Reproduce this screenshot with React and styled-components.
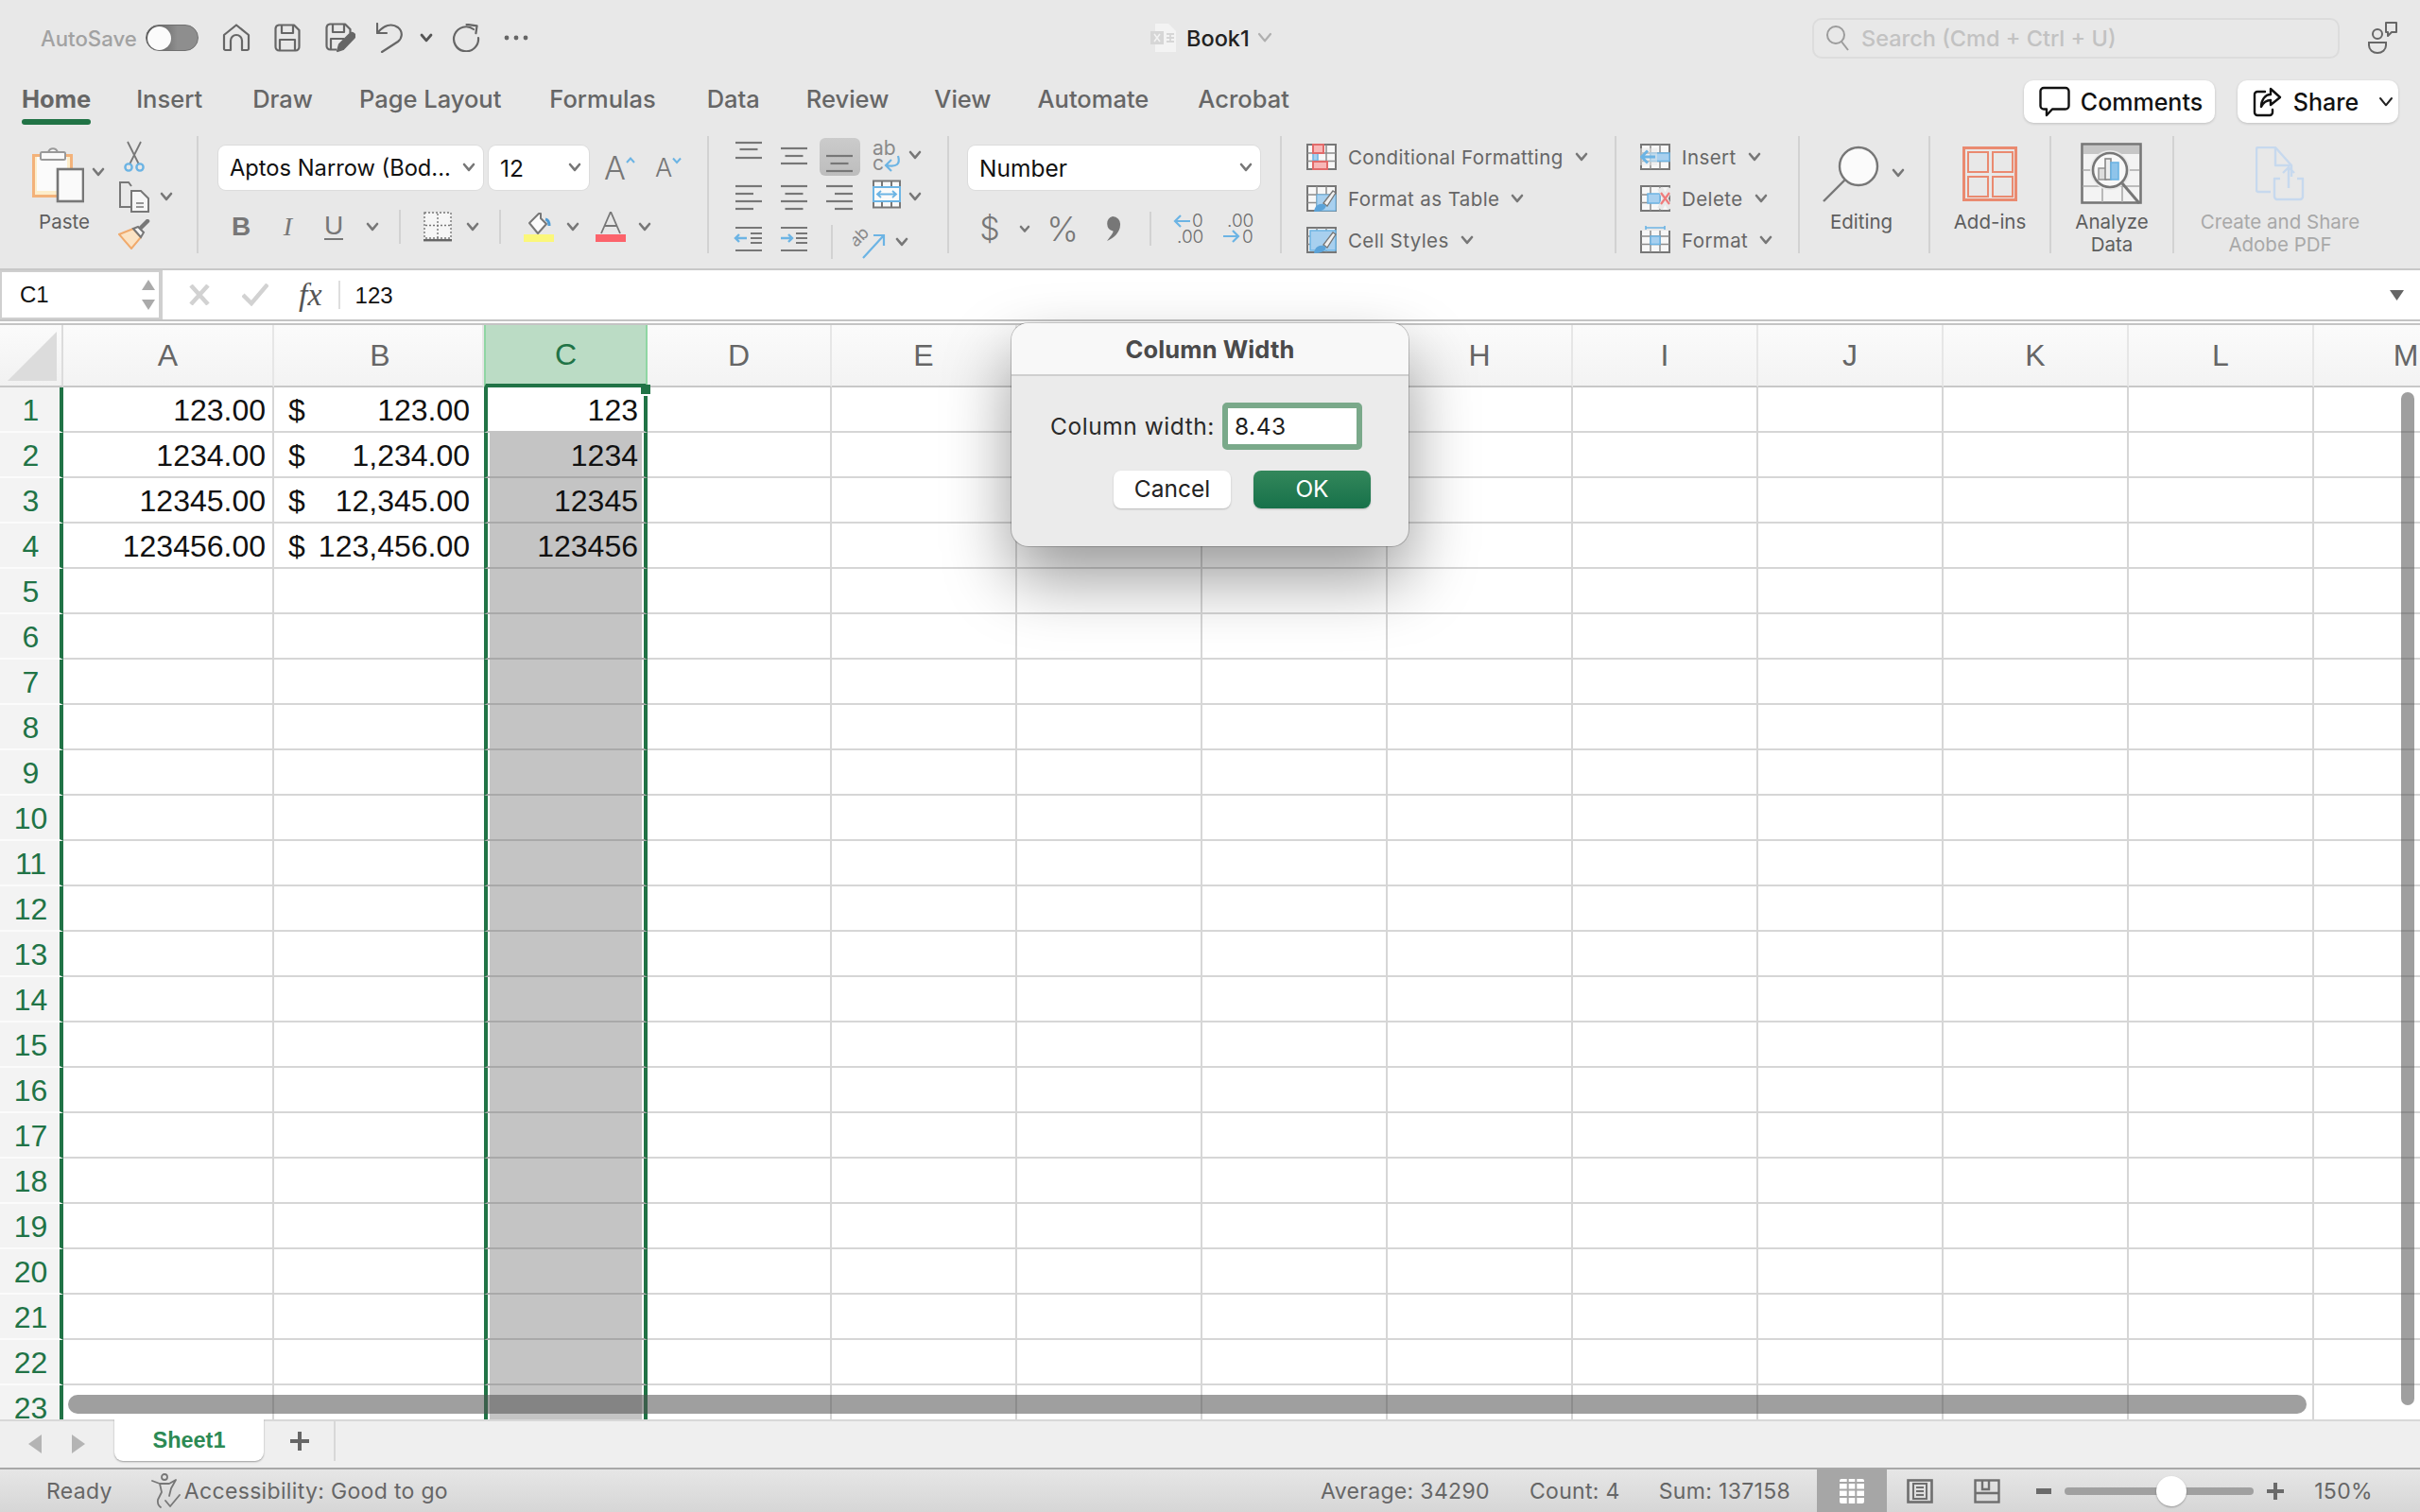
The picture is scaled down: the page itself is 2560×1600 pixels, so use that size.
import React from 'react'
import styled, { createGlobalStyle } from 'styled-components'

const UI = `Inter, "Liberation Sans", sans-serif`
const CELL = `"Liberation Sans", Arial, sans-serif`
const GREEN = '#217346'
const GRAY = '#777777'
const BLUE = '#6cb4e4'

const GlobalStyle = createGlobalStyle`
  html, body { margin: 0; padding: 0; background: #e8e8e8; }
  * { box-sizing: border-box; }
`

const Page = styled.div`
  position: relative;
  width: 2560px;
  height: 1600px;
  overflow: hidden;
  display: flex;
  flex-direction: column;
  background: #e8e8e8;
  font-family: ${UI};
`

/* ---------- title bar ---------- */
const TitleBar = styled.div`
  height: 80px;
  flex: none;
  display: flex;
  align-items: center;
  padding-left: 43px;
`
const AutoSave = styled.span`
  width: 103px;
  font-size: 22.2px;
  font-weight: 500;
  color: #a2a2a2;
`
const Toggle = styled.div`
  width: 56px;
  height: 28px;
  margin-left: 8px;
  padding: 1px;
  border-radius: 14px;
  border: 1px solid #707070;
  background: linear-gradient(90deg, #4e4e4e, #8e8e8e 60%);
`
const Knob = styled.div`
  width: 25px;
  height: 25px;
  border-radius: 50%;
  background: #fbfbfb;
`
const Spot = styled.div`
  flex: none;
  display: flex;
  align-items: center;
  margin-left: ${p => p.$ml || 0}px;
`
const BookName = styled.span`
  width: 66px;
  margin-left: 10px;
  font-size: 23.5px;
  font-weight: 500;
  color: #222;
`
const SearchBox = styled.div`
  width: 558px;
  height: 43px;
  margin-left: 571px;
  display: flex;
  align-items: center;
  gap: 12px;
  padding-left: 12px;
  border: 2px solid #dcdcdc;
  border-radius: 10px;
  font-size: 23.5px;
  font-weight: 500;
  color: #c2c2c2;
`

/* ---------- tab row ---------- */
const TabRow = styled.div`
  height: 56px;
  flex: none;
  display: flex;
  align-items: flex-start;
  padding: 0 22px 0 23px;
`
const Tab = styled.div`
  margin: 2px 0 0 ${p => p.$ml}px;
  font-size: 25.5px;
  line-height: 46px;
  font-weight: ${p => (p.$active ? 700 : 500)};
  color: #666;
  &::after {
    content: '';
    display: block;
    height: 6px;
    margin-top: -2px;
    border-radius: 3px;
    background: ${p => (p.$active ? GREEN : 'transparent')};
  }
`
const PillButton = styled.div`
  height: 45px;
  margin-top: 5px;
  margin-left: ${p => p.$ml || 0}px;
  width: ${p => p.$w}px;
  display: flex;
  align-items: center;
  padding-left: 16px;
  gap: 11px;
  background: #fff;
  border-radius: 10px;
  box-shadow: 0 1px 3px rgba(0, 0, 0, 0.18);
  font-size: 25px;
  font-weight: 500;
  color: #111;
`

/* ---------- ribbon ---------- */
const Ribbon = styled.div`
  height: 148px;
  flex: none;
  display: flex;
  align-items: flex-start;
  padding-top: 8px;
`
const Group = styled.div`
  flex: none;
  width: ${p => p.$w}px;
  height: 124px;
  padding-left: ${p => p.$pl || 0}px;
  display: ${p => (p.$row ? 'flex' : 'block')};
  border-right: ${p => (p.$end ? 'none' : '2px solid #d2d2d2')};
`
const BigButton = styled.div`
  width: ${p => p.$w}px;
  flex: none;
`
const IconBox = styled.div`
  height: 79px;
  display: flex;
  align-items: center;
  justify-content: ${p => p.$justify || 'center'};
`
const BigLabel = styled.div`
  font-size: 20.5px;
  line-height: 24px;
  font-weight: 400;
  text-align: center;
  white-space: nowrap;
  color: ${p => (p.$off ? '#a8a8a8' : '#5e5e5e')};
`
const Stack = styled.div`
  margin-left: ${p => p.$ml || 0}px;
  display: flex;
  flex-direction: column;
`
const StackItem = styled.div`
  height: ${p => p.$h}px;
  display: flex;
  align-items: center;
  gap: 10px;
`
const Slot = styled.div`
  flex: none;
  width: ${p => p.$w}px;
  height: ${p => p.$h || 36}px;
  margin-top: ${p => p.$mt || 0}px;
  display: flex;
  align-items: center;
  justify-content: center;
`
const SelectRow = styled.div`
  display: flex;
  align-items: center;
  gap: 6px;
  margin-top: 10px;
  height: 47px;
`
const Select = styled.div`
  flex: none;
  width: ${p => p.$w}px;
  height: 47px;
  display: flex;
  align-items: center;
  justify-content: space-between;
  padding: 0 8px 0 12px;
  background: #fff;
  border-radius: 8px;
  box-shadow: 0 0 0 1px #dcdcdc;
  font-size: ${p => p.$fs || 24.5}px;
  font-weight: 400;
  white-space: nowrap;
  color: #111;
`
const ToolRow = styled.div`
  display: flex;
  align-items: center;
  margin-top: ${p => p.$mt || 21}px;
  height: 36px;
  color: ${GRAY};
`
const Divider = styled.div`
  width: 2px;
  height: 36px;
  flex: none;
  background: #d2d2d2;
`
const GrowFont = styled.div`
  flex: none;
  display: flex;
  align-items: flex-start;
  width: ${p => p.$w}px;
  margin-left: ${p => p.$ml}px;
  font-size: ${p => p.$size}px;
  font-weight: 300;
  line-height: 36px;
  color: ${GRAY};
`
const Glyph = styled.span`
  font-family: ${p => (p.$serif ? '"Liberation Serif", serif' : CELL)};
  font-size: ${p => p.$size || 28}px;
  font-weight: ${p => p.$weight || 400};
  font-style: ${p => (p.$italic ? 'italic' : 'normal')};
  border-bottom: ${p => (p.$under ? `2px solid ${GRAY}` : 'none')};
  line-height: ${p => (p.$under ? '26px' : '36px')};
  color: ${p => p.$color || GRAY};
`
const ThinGlyph = styled.span`
  font-family: ${UI};
  font-size: ${p => p.$size}px;
  font-weight: 300;
  line-height: 36px;
  color: ${GRAY};
`
const AlignGrid = styled.div`
  display: grid;
  margin-top: 2px;
  grid-template-columns: 48px 48px 48px 52px 8px;
  grid-template-rows: 44px 44px 44px;
  justify-items: center;
`
const AlignOn = styled.div`
  width: 43px;
  height: 40px;
  display: flex;
  justify-content: center;
  border-radius: 6px;
  background: linear-gradient(#cbcbcb, #bdbdbd);
`
const OrientCell = styled.div`
  grid-column: 3 / 6;
  display: flex;
  align-items: center;
  height: 44px;
  padding-left: 15px;
  justify-self: start;
`
const ListRow = styled.div`
  height: 44px;
  display: flex;
  align-items: center;
  gap: 12px;
  font-size: 20.5px;
  letter-spacing: 0.4px;
  color: #666;
`

/* ---------- formula bar ---------- */
const FormulaBar = styled.div`
  height: 60px;
  flex: none;
  display: flex;
  background: #fff;
  border-top: 2px solid #c8c8c8;
  border-bottom: 2px solid #c4c4c4;
  box-shadow: inset 0 -2px 0 #fff, inset 0 -4px 0 #c4c4c4;
  font-family: ${CELL};
  font-size: 24px;
  color: #111;
`
const NameBox = styled.div`
  width: 172px;
  height: 52px;
  flex: none;
  display: flex;
  align-items: center;
  justify-content: space-between;
  padding: 0 4px 0 19px;
  border: 2px solid #cfcfcf;
  border-right-width: 4px;
`
const Stepper = styled.div`
  display: flex;
  flex-direction: column;
  gap: 10px;
`
const FormulaTools = styled.div`
  height: 52px;
  flex: none;
  display: flex;
  align-items: center;
  padding-left: 28px;
`
const Fx = styled.span`
  margin-left: 32px;
  font-family: "Liberation Serif", serif;
  font-style: italic;
  font-size: 34px;
  color: #555;
`
const FxRule = styled.div`
  width: 2px;
  height: 30px;
  margin: 0 16px 0 17px;
  background: #dedede;
`
const FormulaText = styled.span`
  flex: 1;
  line-height: 54px;
`
const Drop = styled.div`
  display: flex;
  align-items: center;
  padding-right: 17px;
  height: 52px;
`

/* ---------- sheet ---------- */
const Sheet = styled.div`
  position: relative;
  height: 1158px;
  flex: none;
  overflow: hidden;
  background: #fff;
`
const Grid = styled.div`
  display: grid;
  width: 2644px;
  grid-template-columns: 67px 223px 222px 173px 195px repeat(9, 196px);
  grid-template-rows: 66px repeat(23, 48px);
  font-family: ${CELL};
  font-size: 32px;
`
const Corner = styled.div`
  display: flex;
  align-items: flex-end;
  justify-content: flex-end;
  padding: 0 5px 5px 0;
  background: linear-gradient(#fbfbfb, #f1f1f1);
  border-right: 2px solid #dcdcdc;
  border-bottom: 2px solid #c8c8c8;
`
const ColHead = styled.div`
  display: flex;
  align-items: center;
  justify-content: center;
  padding-left: ${p => p.$pl || 0}px;
  background: ${p => (p.$on ? '#bbdcc5' : 'linear-gradient(#fbfbfb, #f3f3f3)')};
  color: ${p => (p.$on ? GREEN : '#666')};
  border-right: ${p => (p.$on ? '2px solid #8fd6a3' : '2px solid #e6e6e6')};
  border-left: ${p => (p.$on ? '2px solid #8fd6a3' : 'none')};
  border-bottom: ${p => (p.$on ? `4px solid ${GREEN}` : '2px solid #c8c8c8')};
`
const RowHead = styled.div`
  display: flex;
  align-items: center;
  justify-content: center;
  padding: 2px 0 0 2px;
  color: ${GREEN};
  background: #f3f3f3;
  border-right: 4px solid ${GREEN};
  border-bottom: 2px solid #fbfbfb;
`
const Cell = styled.div`
  display: flex;
  align-items: center;
  justify-content: ${p => (p.$money ? 'space-between' : 'flex-end')};
  padding: 2px ${p => (p.$money ? 15 : 7)}px 0 ${p => (p.$money ? 15 : 0)}px;
  color: #111;
  border-right: ${p => (p.$flush ? 'none' : '2px solid #d6d6d6')};
  border-bottom: 2px solid #d6d6d6;
`
const SelCell = styled.div`
  position: relative;
  display: flex;
  align-items: center;
  justify-content: flex-end;
  padding: 2px 6px 0 0;
  color: #111;
  background: ${p => (p.$active ? '#fff' : '#c4c4c4')};
  border-left: 4px solid ${GREEN};
  border-right: 4px solid ${GREEN};
  border-bottom: 2px solid ${p => (p.$active ? '#c4c4c4' : '#a9a9a9')};
  box-shadow: inset 2px 0 0 #fff, inset -2px 0 0 #fff;
`
const Handle = styled.div`
  position: absolute;
  top: -3px;
  right: -7px;
  width: 10px;
  height: 10px;
  background: ${GREEN};
  box-shadow: 0 2px 0 #fff;
`
const HScroll = styled.div`
  position: absolute;
  left: 72px;
  top: 1132px;
  width: 2368px;
  height: 20px;
  border-radius: 10px;
  background: rgba(80, 80, 80, 0.55);
`
const VScroll = styled.div`
  position: absolute;
  left: 2540px;
  top: 71px;
  width: 14px;
  height: 1072px;
  border-radius: 7px;
  background: rgba(80, 80, 80, 0.55);
`

/* ---------- sheet tabs and status ---------- */
const TabBar = styled.div`
  height: 53px;
  flex: none;
  display: flex;
  align-items: flex-start;
  background: #efefef;
  border-top: 2px solid #d8d8d8;
  border-bottom: 2px solid #a8a8a8;
`
const SheetTab = styled.div`
  width: 158px;
  height: 44px;
  margin: -2px 0 0 31px;
  display: flex;
  align-items: center;
  justify-content: center;
  background: #fff;
  border-radius: 0 0 9px 9px;
  box-shadow: 0 1px 2px rgba(0, 0, 0, 0.35);
  font-family: ${CELL};
  font-size: 23.5px;
  font-weight: 700;
  color: #2c8a54;
`
const AddTab = styled.div`
  width: 76px;
  height: 42px;
  display: flex;
  align-items: center;
  justify-content: center;
  padding-left: 2px;
  border-right: 2px solid #d8d8d8;
`
const StatusBar = styled.div`
  height: 45px;
  flex: none;
  display: flex;
  align-items: center;
  background: linear-gradient(#e6e6e6, #d6d6d6);
  font-size: 23px;
  letter-spacing: 0.33px;
  color: #666;
  padding-left: 49px;
`
const StatusText = styled.span`
  margin-left: ${p => p.$ml || 0}px;
  white-space: nowrap;
`
const ViewButton = styled.div`
  flex: none;
  width: ${p => p.$w || 48}px;
  height: 45px;
  margin-left: ${p => p.$ml || 0}px;
  display: flex;
  align-items: center;
  justify-content: center;
  background: ${p => (p.$on ? '#a6a6a6' : 'transparent')};
`
const ZoomTrack = styled.div`
  position: relative;
  width: 200px;
  height: 8px;
  margin-left: 14px;
  border-radius: 4px;
  background: #a0a0a0;
`
const ZoomThumb = styled.div`
  position: absolute;
  left: 97px;
  top: -12px;
  width: 32px;
  height: 32px;
  border-radius: 50%;
  background: #fff;
  box-shadow: 0 1px 2px rgba(0, 0, 0, 0.3);
`

/* ---------- dialog ---------- */
const Dialog = styled.div`
  position: absolute;
  left: 1070px;
  top: 342px;
  width: 420px;
  height: 236px;
  border-radius: 18px;
  overflow: hidden;
  background: #ebebeb;
  box-shadow: 0 0 0 1px rgba(0, 0, 0, 0.2), 0 34px 70px rgba(0, 0, 0, 0.4);
`
const DialogTitle = styled.div`
  height: 56px;
  display: flex;
  align-items: center;
  justify-content: center;
  background: #f8f8f8;
  border-bottom: 2px solid #cfcfcf;
  font-size: 25.5px;
  letter-spacing: 0.1px;
  font-weight: 700;
  color: #4a4a4a;
`
const DialogRow = styled.div`
  display: flex;
  align-items: center;
  margin-top: 28px;
  padding-left: 41px;
  font-size: 24.5px;
  letter-spacing: 0.55px;
  color: #2a2a2a;
`
const WidthInput = styled.div`
  width: 148px;
  height: 50px;
  margin-left: 8px;
  display: flex;
  align-items: center;
  padding-left: 7px;
  background: #fff;
  border: 6px solid #7aa98a;
  border-radius: 5px;
  font-size: 24.5px;
  color: #1e1e1e;
`
const DialogButtons = styled.div`
  display: flex;
  justify-content: flex-end;
  gap: 24px;
  margin-top: 22px;
  padding-right: 40px;
`
const DialogButton = styled.div`
  width: 124px;
  height: 40px;
  display: flex;
  align-items: center;
  justify-content: center;
  padding-bottom: 2px;
  border-radius: 8px;
  font-size: 24.5px;
  color: ${p => (p.$primary ? '#fff' : '#222')};
  background: ${p => (p.$primary ? 'linear-gradient(#33875b, #17714a)' : '#fff')};
  box-shadow: 0 1px 2px rgba(0, 0, 0, 0.22);
`

/* ---------- icons ---------- */
const Svg = styled.svg`
  display: block;
  flex: none;
`

const Chevron = ({ w = 12, c = GRAY, sw = 2.6 }) => (
  <Svg width={w + 2} height={w * 0.7 + 2} viewBox={`0 0 ${w + 2} ${w * 0.7 + 2}`}>
    <path d={`M2 2 L${w / 2 + 1} ${w * 0.7 - 0.5} L${w} 2`} fill='none' stroke={c} strokeWidth={sw} strokeLinecap='round' strokeLinejoin='round' />
  </Svg>
)

const Home = () => (
  <Svg width='30' height='30' viewBox='0 0 30 30' fill='none' stroke='#666' strokeWidth='2.2' strokeLinejoin='round'>
    <path d='M2 12 L15 1.5 L28 12 V26.5 a1.5 1.5 0 0 1 -1.5 1.5 H21 V18 a6 6 0 0 0 -12 0 V28 H3.5 A1.5 1.5 0 0 1 2 26.5Z' />
  </Svg>
)
const Save = () => (
  <Svg width='28' height='30' viewBox='0 0 28 30' fill='none' stroke='#666' strokeWidth='2.2' strokeLinejoin='round'>
    <path d='M5 1.5 H21 L26.5 7 V24 a4 4 0 0 1 -4 4.5 H5.5 a4 4 0 0 1 -4 -4.5 V5 a4 4 0 0 1 3.5 -3.5Z' />
    <path d='M8 2 V10 H20 V2 M6 28 V17 H22 V28' />
  </Svg>
)
const SaveEdit = () => (
  <Svg width='32' height='32' viewBox='0 0 32 32' fill='none' stroke='#666' strokeWidth='2.2' strokeLinejoin='round'>
    <path d='M12 28.5 H5.5 a4 4 0 0 1 -4 -4.5 V5 a4 4 0 0 1 3.5 -3.5 H21 L26.5 7 V11' />
    <path d='M8 2 V10 H20 V2 M6 28 V17 H20' />
    <path d='M13 30 L15 23 L26 12 a2.8 2.8 0 0 1 4.5 4 L19 28Z' fill='#666' />
  </Svg>
)
const Undo = () => (
  <Svg width='28' height='32' viewBox='0 0 28 32' fill='none' stroke='#666' strokeWidth='2.2' strokeLinecap='round' strokeLinejoin='round'>
    <path d='M1 1 V11 H11' />
    <path d='M1.5 10.5 C8 3 16 0 23 5 C29 10 27 17 23 20 L6 31' />
  </Svg>
)
const Redo = () => (
  <Svg width='30' height='30' viewBox='0 0 30 30' fill='none' stroke='#666' strokeWidth='2.2' strokeLinecap='round' strokeLinejoin='round'>
    <path d='M23 6 A13 13 0 1 0 28 15' />
    <path d='M15 2 H26 V10' transform='rotate(8 24 6)' />
  </Svg>
)
const Dots = () => (
  <Svg width='26' height='6' viewBox='0 0 26 6' fill='#666'>
    <circle cx='3' cy='3' r='2.4' /><circle cx='13' cy='3' r='2.4' /><circle cx='23' cy='3' r='2.4' />
  </Svg>
)
const BookIcon = () => (
  <Svg width='28' height='32' viewBox='0 0 28 32'>
    <path d='M5 1 H19 L27 9 V31 H5Z' fill='#f3f3f3' />
    <rect x='0' y='9' width='14' height='14' fill='#d6d6d6' />
    <path d='M4 12 L10 20 M10 12 L4 20' stroke='#f3f3f3' strokeWidth='1.6' />
    <path d='M17 12 H25 M17 16 H25 M17 20 H25 M21 11 V21' stroke='#d6d6d6' strokeWidth='1.8' />
  </Svg>
)
const SearchIcon = () => (
  <Svg width='26' height='28' viewBox='0 0 26 28' fill='none' stroke='#9c9c9c' strokeWidth='2'>
    <circle cx='11' cy='11' r='9' /><path d='M17 18 L24 27' />
  </Svg>
)
const People = () => (
  <Svg width='32' height='34' viewBox='0 0 32 34' fill='none' stroke='#666' strokeWidth='2'>
    <circle cx='10' cy='13' r='5' />
    <path d='M1 22 H19 V25 a9 8 0 0 1 -18 0Z' />
    <path d='M19 1 H30 V11 H25 L21 15 V11 H19Z' strokeLinejoin='round' />
  </Svg>
)
const CommentIcon = () => (
  <Svg width='33' height='33' viewBox='0 0 33 33' fill='none' stroke='#111' strokeWidth='2.4' strokeLinejoin='round'>
    <path d='M5 2 H28 a3.5 3.5 0 0 1 3.5 3.5 V21 a3.5 3.5 0 0 1 -3.5 3.5 H14 L8 31 V24.5 H5 A3.5 3.5 0 0 1 1.5 21 V5.5 A3.5 3.5 0 0 1 5 2Z' />
  </Svg>
)
const ShareIcon = () => (
  <Svg width='32' height='32' viewBox='0 0 32 32' fill='none' stroke='#111' strokeWidth='2.4' strokeLinejoin='round' strokeLinecap='round'>
    <path d='M13 5 H5 a3 3 0 0 0 -3 3 V27 a3 3 0 0 0 3 3 H18 a3 3 0 0 0 3 -3 V24' />
    <path d='M19 2 L29 11 L19 19 V14 C14 14 11 17 9 21 C9 14 13 8 19 8Z' />
  </Svg>
)

const Clipboard = () => (
  <Svg width='56' height='62' viewBox='0 0 56 62'>
    <rect x='2.5' y='11.5' width='40' height='43' fill='#fdeecb' stroke='#f3b27a' strokeWidth='3' />
    <rect x='6' y='13' width='32' height='36' fill='#fbfbfb' />
    <path d='M18 8 a5.5 6.5 0 0 1 10 0' fill='#fafafa' stroke='#999' strokeWidth='2' />
    <rect x='10' y='8' width='26' height='8' rx='1.5' fill='#fafafa' stroke='#999' strokeWidth='2' />
    <rect x='28' y='26' width='27' height='34' fill='#fafafa' stroke='#777' strokeWidth='2.6' />
  </Svg>
)
const Scissors = () => (
  <Svg width='24' height='34' viewBox='0 0 24 34' fill='none'>
    <path d='M5 1 L17 25 M19 1 L7 25' stroke='#777' strokeWidth='1.8' />
    <circle cx='6' cy='28' r='3.6' stroke={BLUE} strokeWidth='2.4' />
    <circle cx='18' cy='28' r='3.6' stroke={BLUE} strokeWidth='2.4' />
  </Svg>
)
const CopyIcon = () => (
  <Svg width='34' height='34' viewBox='0 0 34 34' fill='none' stroke='#777' strokeWidth='2'>
    <path d='M13 28 H2 V2 H11 L14 6' />
    <path d='M14 11 H24 L32 19 V33 H14Z' fill='#f6f6f6' />
    <path d='M19 24 H27 M19 28 H27' strokeWidth='1.6' />
  </Svg>
)
const BrushIcon = () => (
  <Svg width='34' height='32' viewBox='0 0 34 32'>
    <path d='M1 16 L16 10 L24 19 L14 31Z' fill='#fbe3c4' stroke='#f0aa6c' strokeWidth='2' />
    <path d='M16 10 L24 19 L27 14 L21 8Z' fill='#f5f5f5' stroke='#777' strokeWidth='2' />
    <path d='M24 9 L31 2' stroke='#777' strokeWidth='4.5' strokeLinecap='round' />
  </Svg>
)
const Caret = ({ down }) => (
  <Svg width='10' height='8' viewBox='0 0 10 8' style={{ marginTop: 6 }}>
    <path d={down ? 'M1 1.5 L5 6 L9 1.5' : 'M1 6 L5 1.5 L9 6'} fill='none' stroke={BLUE} strokeWidth='2' />
  </Svg>
)
const BordersIcon = () => (
  <Svg width='30' height='32' viewBox='0 0 30 32'>
    <rect x='1' y='1' width='28' height='27' fill='#f6f6f6' stroke='#777' strokeWidth='1.4' strokeDasharray='2 2' />
    <path d='M15 2 V28 M2 14.5 H28' stroke='#777' strokeWidth='1.4' strokeDasharray='2 2' />
    <rect x='0' y='29' width='30' height='2.4' fill='#666' />
  </Svg>
)
const FillIcon = () => (
  <Svg width='32' height='32' viewBox='0 0 32 32'>
    <path d='M6 12 L16 2 L18 2 L18 7 L24 13 L15 23Z' fill='#fbfbfb' stroke='#777' strokeWidth='2' strokeLinejoin='round' />
    <path d='M23 8 Q27 9 27 15' fill='none' stroke='#4f9bd4' strokeWidth='3' />
    <rect x='0' y='24' width='32' height='8' fill='#fbf77a' />
  </Svg>
)
const FontColorIcon = () => (
  <Svg width='32' height='32' viewBox='0 0 32 32'>
    <path d='M6 23 L16 0 L26 23 M10 15 H22' fill='none' stroke='#777' strokeWidth='1.8' />
    <rect x='0' y='24' width='32' height='8' fill='#fc636b' />
  </Svg>
)
const Lines = ({ rows, align = 'left' }) => (
  <Svg width='32' height='40' viewBox='0 0 32 40' stroke='#777' strokeWidth='2.2'>
    {rows.map(([y, w]) => {
      const x = align === 'left' ? 2 : align === 'right' ? 30 - w : 16 - w / 2
      return <path key={y} d={`M${x} ${y} h${w}`} />
    })}
  </Svg>
)
const WrapIcon = () => (
  <Svg width='34' height='40' viewBox='0 0 34 40'>
    <text x='2' y='18' fontFamily={UI} fontSize='21' fill='#8a8a8a'>ab</text>
    <text x='2' y='34' fontFamily={UI} fontSize='21' fill='#8a8a8a'>c</text>
    <path d='M29 19 Q33 32 17 29 M22 23 L16 29 L22 35' fill='none' stroke={BLUE} strokeWidth='2.2' />
  </Svg>
)
const MergeIcon = () => (
  <Svg width='32' height='32' viewBox='0 0 32 32' fill='none'>
    <rect x='2' y='1.5' width='28' height='28' stroke='#777' strokeWidth='2' fill='#f8f8f8' />
    <path d='M11 2 V8 M21 2 V8 M11 24 V29 M21 24 V29' stroke='#777' strokeWidth='2' />
    <rect x='2' y='8' width='28' height='15' stroke={BLUE} strokeWidth='2' fill='#fafafa' />
    <path d='M6 15.5 H26 M10 12 L6 15.5 L10 19 M22 12 L26 15.5 L22 19' stroke={BLUE} strokeWidth='1.8' />
  </Svg>
)
const IndentIcon = ({ more }) => (
  <Svg width='32' height='40' viewBox='0 0 32 40' fill='none'>
    <path d='M2 7 H30 M2 31 H30 M18 13 H30 M18 18 H30 M18 23 H30' stroke='#777' strokeWidth='2.2' />
    {more
      ? <path d='M2 18 H14 M10 14 L14 18 L10 22' stroke={BLUE} strokeWidth='2.4' />
      : <path d='M14 18 H2 M6 14 L2 18 L6 22' stroke={BLUE} strokeWidth='2.4' />}
  </Svg>
)
const OrientIcon = () => (
  <Svg width='36' height='36' viewBox='0 0 36 36'>
    <text x='0' y='20' fontFamily={UI} fontSize='18' fill='#8a8a8a' transform='rotate(-45 7 18)'>ab</text>
    <path d='M11 35 L33 11 M22 11 H33 V22' fill='none' stroke={BLUE} strokeWidth='2.2' />
  </Svg>
)
const CommaIcon = () => (
  <Svg width='17' height='26' viewBox='0 0 17 26' fill='#777'>
    <path d='M8 0 a8 8 0 0 1 8 9 C16 17 9 23 2 26 C6 21 9 17 8.5 15.5 A8 8 0 0 1 8 0Z' />
  </Svg>
)
const DecimalIcon = ({ more }) => (
  <Svg width='34' height='34' viewBox='0 0 34 34'>
    <text x={more ? 5 : 21} y='15' fontFamily={UI} fontSize='19' fontWeight='300' fill='#6e6e6e'>{more ? '.00' : '0'}</text>
    <text x={more ? 21 : 5} y='32' fontFamily={UI} fontSize='19' fontWeight='300' fill='#6e6e6e'>{more ? '0' : '.00'}</text>
    {more
      ? <path d='M1 25 H17 M11 19 L17 25 L11 31' fill='none' stroke={BLUE} strokeWidth='2.2' />
      : <path d='M19 9 H3 M9 3 L3 9 L9 15' fill='none' stroke={BLUE} strokeWidth='2.2' />}
  </Svg>
)

const TableBase = ({ children }) => (
  <Svg width='32' height='30' viewBox='0 0 32 30' fill='none'>
    <rect x='1' y='2' width='30' height='26' fill='#f7f7f7' stroke='#777' strokeWidth='2' />
    <path d='M11 2 V28 M21 2 V28 M1 11 H31 M1 19.5 H31' stroke='#8c8c8c' strokeWidth='1.5' />
    {children}
  </Svg>
)
const MiniBrush = () => (
  <g>
    <path d='M18 20 L28 7 L31 9 L22 23Z' fill='#f0f0f0' stroke='#777' strokeWidth='1.3' />
    <path d='M8 29 Q9 22 14 21 Q19 20 21 23 Q19 29 8 29Z' fill='#5ba3d9' />
  </g>
)
const CondIcon = () => (
  <TableBase>
    <rect x='7' y='11' width='5' height='8' fill='#a8d0ef' stroke={BLUE} strokeWidth='1.5' />
    <rect x='7' y='2' width='11' height='9' fill='#f8b7b7' stroke='#e26a6a' strokeWidth='2' />
    <rect x='7' y='20' width='15' height='8' fill='#f8b7b7' stroke='#e26a6a' strokeWidth='2' />
  </TableBase>
)
const TableStyleIcon = () => (
  <TableBase>
    <rect x='11' y='11' width='20' height='17' fill='#a8d0ef' stroke={BLUE} strokeWidth='1' />
    <MiniBrush />
  </TableBase>
)
const CellStyleIcon = () => (
  <TableBase>
    <rect x='4' y='5' width='27' height='21' fill='#a8d0ef' stroke={BLUE} strokeWidth='1.5' />
    <MiniBrush />
  </TableBase>
)
const InsertIcon = () => (
  <TableBase>
    <rect x='11' y='11' width='20' height='8.5' fill='#a8d0ef' stroke={BLUE} strokeWidth='1.5' />
    <rect x='0' y='6' width='18' height='18' fill='#e8e8e8' opacity='0.5' />
    <path d='M16 15 H2 M8 8.5 L1.5 15 L8 21.5' stroke={BLUE} strokeWidth='3' />
  </TableBase>
)
const DeleteIcon = () => (
  <TableBase>
    <rect x='8' y='10' width='13' height='10' fill='#a8d0ef' stroke={BLUE} strokeWidth='1.5' />
    <path d='M21 4 L32 26 M32 4 L21 26' stroke='#e8e8e8' strokeWidth='6' />
    <path d='M22 9 L31 21 M31 9 L22 21' stroke='#ef7c7c' strokeWidth='2.2' />
  </TableBase>
)
const FormatIcon = () => (
  <TableBase>
    <rect x='11' y='11' width='10' height='8.5' fill='#a8d0ef' stroke={BLUE} strokeWidth='1.5' />
    <rect x='0' y='0' width='32' height='5' fill='#e8e8e8' />
    <path d='M6 2 H26 M6 0 V4 M26 0 V4' stroke={BLUE} strokeWidth='1.6' />
  </TableBase>
)
const Magnifier = () => (
  <Svg width='62' height='62' viewBox='0 0 62 62' fill='none' stroke='#777' strokeWidth='2.4'>
    <circle cx='39' cy='23' r='20' fill='#fbfbfb' />
    <path d='M25 37 L2 60' />
  </Svg>
)
const AddinsIcon = () => (
  <Svg width='58' height='58' viewBox='0 0 58 58' fill='none' stroke='#ea8a70'>
    <rect x='1.5' y='1.5' width='55' height='55' strokeWidth='3' />
    <g strokeWidth='2'>
      <rect x='6' y='6' width='21' height='21' /><rect x='32' y='6' width='21' height='21' />
      <rect x='6' y='32' width='21' height='21' /><rect x='32' y='32' width='21' height='21' />
    </g>
  </Svg>
)
const AnalyzeIcon = () => (
  <Svg width='66' height='66' viewBox='0 0 66 66' fill='none'>
    <rect x='1.5' y='1.5' width='62' height='62' fill='#f3f3f3' stroke='#777' strokeWidth='2.6' />
    <rect x='3' y='3' width='59' height='9' fill='#c6c6c6' />
    <path d='M2 29 H62 M2 46 H62 M23 46 V63 M44 46 V63 M23 12 V46' stroke='#aaa' strokeWidth='1.6' />
    <circle cx='31' cy='29' r='21' fill='#e8e8e8' />
    <circle cx='31' cy='29' r='18' fill='#f8f8f8' stroke='#777' strokeWidth='2.6' />
    <rect x='19' y='27' width='8' height='12' fill='#ddd' stroke='#999' strokeWidth='1.6' />
    <rect x='26' y='17' width='6' height='22' fill='#eee' stroke='#888' strokeWidth='1.6' />
    <rect x='32' y='21' width='8' height='18' fill='#8fc4ea' stroke={BLUE} strokeWidth='1.6' />
    <path d='M44 43 L62 64' stroke='#777' strokeWidth='3' />
  </Svg>
)
const PdfIcon = () => (
  <Svg width='52' height='58' viewBox='0 0 52 58' fill='none' stroke='#c7d9ee' strokeWidth='2.4' strokeLinejoin='round'>
    <path d='M16 48 H3 a2 2 0 0 1 -2 -2 V3 a2 2 0 0 1 2 -2 H21 L38 20 V32' />
    <path d='M21 1 V20 H38' />
    <path d='M26 34 H20 V53 a3 3 0 0 0 3 3 H47 a3 3 0 0 0 3 -3 V34 H44' />
    <path d='M35 44 V22 M29 28 L35 22 L41 28' />
  </Svg>
)
const Cross = () => (
  <Svg width='22' height='22' viewBox='0 0 22 22'>
    <path d='M2 1 L20 21 M20 1 L2 21' stroke='#d2d2d2' strokeWidth='4.5' />
  </Svg>
)
const Check = () => (
  <Svg width='28' height='24' viewBox='0 0 28 24' style={{ marginLeft: 34 }}>
    <path d='M1 12 L10 21 L27 1' fill='none' stroke='#d2d2d2' strokeWidth='4.5' />
  </Svg>
)
const Triangle = ({ dir, c = '#aaa', w = 14, h = 11 }) => {
  const pts = {
    up: `0,${h} ${w / 2},0 ${w},${h}`,
    down: `0,0 ${w},0 ${w / 2},${h}`,
    left: `${w},0 0,${h / 2} ${w},${h}`,
    right: `0,0 ${w},${h / 2} 0,${h}`,
  }[dir]
  return <Svg width={w} height={h} viewBox={`0 0 ${w} ${h}`}><polygon points={pts} fill={c} /></Svg>
}
const AccessIcon = () => (
  <Svg width='32' height='38' viewBox='0 0 32 38' fill='none' stroke='#777' strokeWidth='1.8' strokeLinejoin='round' strokeLinecap='round'>
    <circle cx='15' cy='4' r='3' />
    <path d='M2 8 L10 11 H20 L27 7 L22 16 L20 24 M10 11 L12 20 L8 28 Q7 33 11 36' />
    <path d='M16 29 L21 35 L31 23' />
  </Svg>
)
const NormalView = () => (
  <Svg width='26' height='26' viewBox='0 0 26 26'>
    <rect width='26' height='26' rx='2' fill='#fff' />
    <path d='M8.7 0 V26 M17.3 0 V26 M0 4 H26 M0 11.5 H26 M0 19 H26' stroke='#a6a6a6' strokeWidth='2' />
  </Svg>
)
const PageView = () => (
  <Svg width='28' height='26' viewBox='0 0 28 26' fill='none' stroke='#6e6e6e'>
    <rect x='1.5' y='1.5' width='25' height='23' strokeWidth='2.6' />
    <rect x='7' y='5' width='14' height='16' strokeWidth='2' />
    <path d='M10 9 H18 M10 13 H18 M10 17 H18' strokeWidth='2' />
  </Svg>
)
const BreakView = () => (
  <Svg width='28' height='26' viewBox='0 0 28 26' fill='none' stroke='#6e6e6e' strokeWidth='2.4'>
    <rect x='1.5' y='1.5' width='25' height='23' />
    <path d='M1.5 15 H26 M9 2 V11 H16 V2' />
  </Svg>
)
const Minus = () => <Svg width='16' height='6' viewBox='0 0 16 6'><rect width='16' height='6' fill='#6a6a6a' /></Svg>
const Plus = ({ s = 18, t = 4, c = '#6a6a6a' }) => (
  <Svg width={s} height={s} viewBox={`0 0 ${s} ${s}`}>
    <rect y={(s - t) / 2} width={s} height={t} fill={c} />
    <rect x={(s - t) / 2} width={t} height={s} fill={c} />
  </Svg>
)

/* ---------- sheet data ---------- */
const COLS = ['D', 'E', 'F', 'G', 'H', 'I', 'J', 'K', 'L', 'M']
const SHEET = [
  ['123.00', '123.00', '123'],
  ['1234.00', '1,234.00', '1234'],
  ['12345.00', '12,345.00', '12345'],
  ['123456.00', '123,456.00', '123456'],
]
const ROWS = Array.from({ length: 23 }, (_, i) => i + 1)

const TABS = [
  ['Home', 0, true], ['Insert', 48], ['Draw', 53], ['Page Layout', 49], ['Formulas', 51],
  ['Data', 54], ['Review', 49], ['View', 48], ['Automate', 49], ['Acrobat', 52],
]

const SheetGrid = () => (
  <Grid>
    <Corner><Svg width='52' height='52' viewBox='0 0 52 52'><polygon points='52,0 52,52 0,52' fill='#dcdcdc' /></Svg></Corner>
    <ColHead>A</ColHead>
    <ColHead $pl={4}>B</ColHead>
    <ColHead $on>C</ColHead>
    {COLS.map(c => <ColHead key={c}>{c}</ColHead>)}
    {ROWS.map(r => {
      const d = SHEET[r - 1]
      return (
        <React.Fragment key={r}>
          <RowHead>{r}</RowHead>
          <Cell>{d && d[0]}</Cell>
          <Cell $money={!!d} $flush>{d && <span>$</span>}{d && <span>{d[1]}</span>}</Cell>
          <SelCell $active={r === 1}>{d && d[2]}{r === 1 && <Handle />}</SelCell>
          {COLS.map(c => <Cell key={c} />)}
        </React.Fragment>
      )
    })}
  </Grid>
)

export default function App () {
  return (
    <Page>
      <GlobalStyle />
      <TitleBar>
        <AutoSave>AutoSave</AutoSave>
        <Toggle><Knob /></Toggle>
        <Spot $ml={25}><Home /></Spot>
        <Spot $ml={25}><Save /></Spot>
        <Spot $ml={26}><SaveEdit /></Spot>
        <Spot $ml={22}><Undo /></Spot>
        <Spot $ml={18}><Chevron w={12} c='#555' sw={2.8} /></Spot>
        <Spot $ml={20}><Redo /></Spot>
        <Spot $ml={25}><Dots /></Spot>
        <Spot $ml={658}><BookIcon /></Spot>
        <BookName>Book1</BookName>
        <Spot $ml={9}><Chevron w={14} c='#b0b0b0' sw={2.2} /></Spot>
        <SearchBox><SearchIcon />Search (Cmd + Ctrl + U)</SearchBox>
        <Spot $ml={30}><People /></Spot>
      </TitleBar>

      <TabRow>
        {TABS.map(([name, ml, active]) => <Tab key={name} $ml={ml} $active={active}>{name}</Tab>)}
        <PillButton $w={202} $ml={777}><CommentIcon />Comments</PillButton>
        <PillButton $w={170} $ml={24}><ShareIcon />Share<Spot $ml={10}><Chevron w={14} c='#222' sw={2} /></Spot></PillButton>
      </TabRow>

      <Ribbon>
        <Group $w={210} $pl={33} $row>
          <BigButton $w={70}>
            <IconBox $justify='flex-start'><Clipboard /></IconBox>
            <BigLabel>Paste</BigLabel>
          </BigButton>
          <Slot $w={2} $h={14} $mt={31}><Chevron /></Slot>
          <Stack $ml={20}>
            <StackItem $h={44}><Slot $w={34} $h={34}><Scissors /></Slot></StackItem>
            <StackItem $h={40}><CopyIcon /><Chevron /></StackItem>
            <StackItem $h={40}><BrushIcon /></StackItem>
          </Stack>
        </Group>

        <Group $w={540} $pl={21}>
          <SelectRow>
            <Select $w={280} $fs={23.7}>Aptos Narrow (Bod...<Chevron /></Select>
            <Select $w={106}>12<Chevron /></Select>
            <GrowFont $w={48} $ml={10} $size={34}>A<Caret /></GrowFont>
            <GrowFont $w={40} $ml={0} $size={27}>A<Caret down /></GrowFont>
          </SelectRow>
          <ToolRow>
            <Slot $w={48}><Glyph $weight={700}>B</Glyph></Slot>
            <Slot $w={51}><Glyph $serif $italic>I</Glyph></Slot>
            <Slot $w={46}><Glyph $under>U</Glyph></Slot>
            <Slot $w={36}><Chevron /></Slot>
            <Slot $w={22}><Divider /></Slot>
            <Slot $w={58}><BordersIcon /></Slot>
            <Slot $w={16}><Chevron /></Slot>
            <Slot $w={42}><Divider /></Slot>
            <Slot $w={40}><FillIcon /></Slot>
            <Slot $w={32}><Chevron /></Slot>
            <Slot $w={48}><FontColorIcon /></Slot>
            <Slot $w={24}><Chevron /></Slot>
          </ToolRow>
        </Group>

        <Group $w={254} $pl={18}>
          <AlignGrid>
            <Lines rows={[[5, 28], [12, 19], [21, 28]]} align='center' />
            <Lines rows={[[11, 28], [19, 19], [27, 28]]} align='center' />
            <AlignOn><Lines rows={[[19, 28], [27, 19], [35, 28]]} align='center' /></AlignOn>
            <WrapIcon />
            <Slot $w={8} $h={36}><Chevron /></Slot>
            <Lines rows={[[7, 28], [15, 19], [23, 28], [31, 19]]} />
            <Lines rows={[[7, 28], [15, 19], [23, 28], [31, 19]]} align='center' />
            <Lines rows={[[7, 28], [15, 19], [23, 28], [31, 19]]} align='right' />
            <MergeIcon />
            <Slot $w={8} $h={36}><Chevron /></Slot>
            <IndentIcon />
            <IndentIcon more />
            <OrientCell>
              <Divider />
              <Spot $ml={21}><OrientIcon /></Spot>
              <Spot $ml={9}><Chevron /></Spot>
            </OrientCell>
          </AlignGrid>
        </Group>

        <Group $w={352} $pl={20}>
          <SelectRow>
            <Select $w={309}>Number<Chevron /></Select>
          </SelectRow>
          <ToolRow $mt={23}>
            <Slot $w={46}><ThinGlyph $size={34}>$</ThinGlyph></Slot>
            <Slot $w={28}><Chevron w={10} /></Slot>
            <Slot $w={52}><ThinGlyph $size={36}>%</ThinGlyph></Slot>
            <Slot $w={54}><CommaIcon /></Slot>
            <Slot $w={26}><Divider /></Slot>
            <Slot $w={54}><DecimalIcon /></Slot>
            <Slot $w={52}><DecimalIcon more /></Slot>
          </ToolRow>
        </Group>

        <Group $w={354} $pl={26}>
          <ListRow><CondIcon />Conditional Formatting<Chevron /></ListRow>
          <ListRow><TableStyleIcon />Format as Table<Chevron /></ListRow>
          <ListRow><CellStyleIcon />Cell Styles<Chevron /></ListRow>
        </Group>

        <Group $w={194} $pl={25}>
          <ListRow><InsertIcon />Insert<Chevron /></ListRow>
          <ListRow><DeleteIcon />Delete<Chevron /></ListRow>
          <ListRow><FormatIcon />Format<Chevron /></ListRow>
        </Group>

        <Group $w={138} $row>
          <BigButton $w={130}>
            <IconBox $justify='flex-start'>
              <Spot $ml={23}><Magnifier /></Spot>
              <Spot $ml={12}><Chevron /></Spot>
            </IconBox>
            <BigLabel>Editing</BigLabel>
          </BigButton>
        </Group>

        <Group $w={128}>
          <IconBox><AddinsIcon /></IconBox>
          <BigLabel>Add-ins</BigLabel>
        </Group>

        <Group $w={130}>
          <IconBox><AnalyzeIcon /></IconBox>
          <BigLabel>Analyze<br />Data</BigLabel>
        </Group>

        <Group $w={224} $end>
          <IconBox><PdfIcon /></IconBox>
          <BigLabel $off>Create and Share<br />Adobe PDF</BigLabel>
        </Group>
      </Ribbon>

      <FormulaBar>
        <NameBox>
          C1
          <Stepper><Triangle dir='up' /><Triangle dir='down' /></Stepper>
        </NameBox>
        <FormulaTools>
          <Cross />
          <Check />
          <Fx>fx</Fx>
          <FxRule />
        </FormulaTools>
        <FormulaText>123</FormulaText>
        <Drop><Triangle dir='down' c='#666' w={15} h={11} /></Drop>
      </FormulaBar>

      <Sheet>
        <SheetGrid />
        <HScroll />
        <VScroll />
      </Sheet>

      <TabBar>
        <Spot $ml={30}><Slot $w={14} $h={48}><Triangle dir='left' c='#b4b4b4' w={14} h={20} /></Slot></Spot>
        <Spot $ml={32}><Slot $w={14} $h={48}><Triangle dir='right' c='#b4b4b4' w={14} h={20} /></Slot></Spot>
        <SheetTab>Sheet1</SheetTab>
        <AddTab><Plus s={20} t={4} c='#666' /></AddTab>
      </TabBar>

      <StatusBar>
        <StatusText>Ready</StatusText>
        <Spot $ml={40}><AccessIcon /></Spot>
        <StatusText $ml={4}>Accessibility: Good to go</StatusText>
        <StatusText $ml={923}>Average: 34290</StatusText>
        <StatusText $ml={42}>Count: 4</StatusText>
        <StatusText $ml={41}>Sum: 137158</StatusText>
        <ViewButton $on $w={74} $ml={28}><NormalView /></ViewButton>
        <ViewButton $w={28} $ml={21}><PageView /></ViewButton>
        <ViewButton $w={28} $ml={43}><BreakView /></ViewButton>
        <Spot $ml={38}><Minus /></Spot>
        <ZoomTrack><ZoomThumb /></ZoomTrack>
        <Spot $ml={14}><Plus /></Spot>
        <StatusText $ml={32}>150%</StatusText>
      </StatusBar>

      <Dialog>
        <DialogTitle>Column Width</DialogTitle>
        <DialogRow>Column width:<WidthInput>8.43</WidthInput></DialogRow>
        <DialogButtons>
          <DialogButton>Cancel</DialogButton>
          <DialogButton $primary>OK</DialogButton>
        </DialogButtons>
      </Dialog>
    </Page>
  )
}
